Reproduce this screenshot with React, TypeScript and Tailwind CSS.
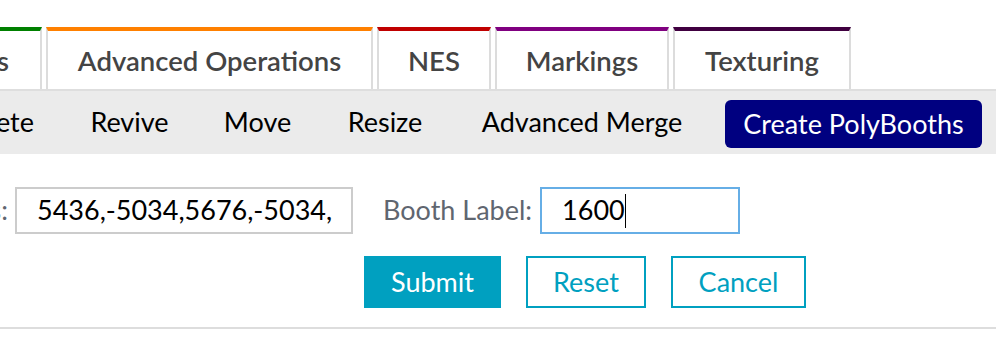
import React from "react";

const tabs = [
  { label: "Advanced Operations", bar: "border-t-[#ff8000]", w: "w-[327px]" },
  { label: "NES", bar: "border-t-[#c00000]", w: "w-[114px]" },
  { label: "Markings", bar: "border-t-[#800080]", w: "w-[174px]" },
  { label: "Texturing", bar: "border-t-[#400040]", w: "w-[178px]" },
];

const tools = [
  { label: "Revive", w: "w-[109px]" },
  { label: "Move", w: "w-[97px]" },
  { label: "Resize", w: "w-[108px]" },
  { label: "Advanced Merge", w: "w-[236px]" },
];

const App = () => {
  return (
    <div className="w-[996px] h-[352px] overflow-hidden bg-white pt-[27px] font-['Lato','Open_Sans',sans-serif]">
      {/* tab strip */}
      <div className="flex gap-1 h-[62px]">
        <div className="w-[42px] flex justify-end overflow-hidden border-t-4 border-t-[#008000] border-r-2 border-r-[#dcdcdc]">
          <span className="pr-[31px] pt-[9px] text-[27.5px] font-semibold text-[#444] whitespace-nowrap">Booths</span>
        </div>
        {tabs.map((t) => (
          <div
            key={t.label}
            className={`${t.w} border-t-4 ${t.bar} border-x-2 border-x-[#dcdcdc] pt-[9px] text-center text-[27.5px] font-semibold text-[#444] whitespace-nowrap`}
          >
            {t.label}
          </div>
        ))}
      </div>

      {/* toolbar */}
      <div className="flex items-center gap-[25px] h-[65px] bg-[#ebebeb] border-t-2 border-[#dedede] text-[27px] text-black">
        <div className="w-[50px] flex justify-end overflow-hidden">
          <span className="pr-4 whitespace-nowrap">Delete</span>
        </div>
        {tools.map((t) => (
          <span key={t.label} className={`${t.w} text-center whitespace-nowrap`}>
            {t.label}
          </span>
        ))}
        <button className="w-[257px] h-[48px] mt-[3px] rounded-[6px] bg-[#000080] text-white text-center whitespace-nowrap">
          Create PolyBooths
        </button>
      </div>

      {/* form */}
      <div className="pt-[33px]">
        <div className="flex items-center">
          <div className="w-[8px] flex justify-end overflow-hidden text-[27px] text-[#5f6670]">
            <span className="whitespace-nowrap">Points:</span>
          </div>
          <div className="ml-[7px] w-[338px] h-[47px] border-2 border-[#cccccc] pl-5 flex items-center text-[27px] text-black overflow-hidden whitespace-nowrap">
            5436,-5034,5676,-5034,
          </div>
          <span className="ml-[30px] text-[27px] text-[#5f6670] whitespace-nowrap">Booth Label:</span>
          <div className="ml-2 w-[200px] h-[47px] border-2 border-[#66aee6] pl-5 flex items-center text-[27px] text-black">
            1600
            <span className="inline-block w-px h-[34px] bg-black" />
          </div>
        </div>

        <div className="flex gap-[25px] pl-[364px] pt-[22px]">
          <button className="w-[137px] h-[52px] bg-[#00a0c0] text-white text-[27px]">Submit</button>
          <button className="w-[120px] h-[52px] border-2 border-[#00a0c0] text-[#00a0c0] text-[27px]">Reset</button>
          <button className="w-[135px] h-[52px] border-2 border-[#00a0c0] text-[#00a0c0] text-[27px]">Cancel</button>
        </div>

        <div className="mt-[19px] h-[2px] bg-[#dddddd]" />
      </div>
    </div>
  );
};

export default App;
